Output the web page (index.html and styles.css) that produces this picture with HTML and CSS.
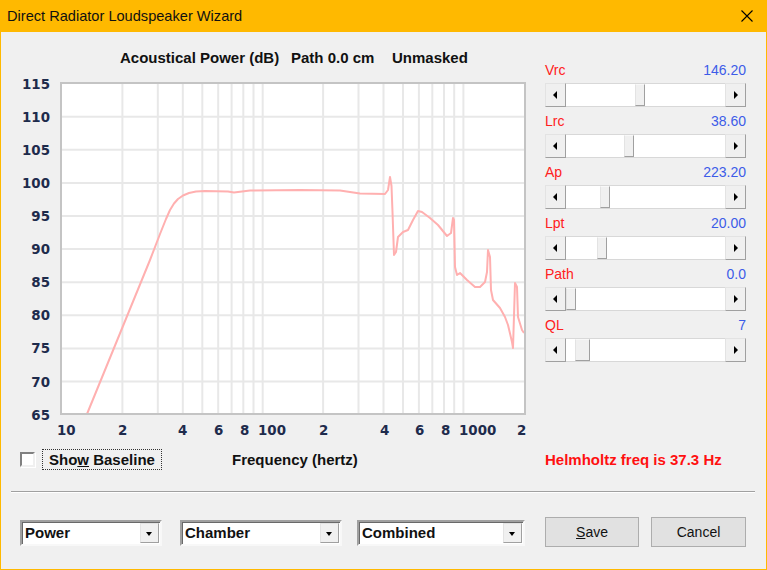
FILE: index.html
```html
<!DOCTYPE html>
<html lang="en">
    <head>
        <meta charset="UTF-8">
        <title>Direct Radiator Loudspeaker Wizard</title>
        <link rel="stylesheet" href="styles.css">
    </head>
    <body>
        <div class="window">
            <div class="titlebar">
                <span class="title">Direct Radiator Loudspeaker Wizard</span>
                <svg class="close" width="12" height="12" viewBox="0 0 12 12">
                    <path d="M0.5 0.5 L11.5 11.5 M11.5 0.5 L0.5 11.5" stroke="#000" stroke-width="1.1" fill="none"/>
                </svg>
            </div>

            <div class="client">
                <div class="upper">
                    <!-- 图表 -->
                    <svg class="chart" width="530" height="410" viewBox="1 33 530 410">
                        <text class="chart-title" x="120" y="62.5">Acoustical Power (dB)</text>
                        <text class="chart-title" x="291" y="62.5">Path 0.0 cm</text>
                        <text class="chart-title" x="392" y="62.5">Unmasked</text>

                        <g class="ylabels">
                            <text x="50" y="88.6">115</text>
                            <text x="50" y="121.7">110</text>
                            <text x="50" y="154.8">105</text>
                            <text x="50" y="187.9">100</text>
                            <text x="50" y="221">95</text>
                            <text x="50" y="254.1">90</text>
                            <text x="50" y="287.2">85</text>
                            <text x="50" y="320.3">80</text>
                            <text x="50" y="353.4">75</text>
                            <text x="50" y="386.5">70</text>
                            <text x="50" y="419.6">65</text>
                        </g>

                        <rect x="61" y="83" width="464" height="331" fill="#fff"/>
                        <g class="grid">
                            <line x1="62" y1="116.7" x2="524" y2="116.7"/>
                            <line x1="62" y1="149.8" x2="524" y2="149.8"/>
                            <line x1="62" y1="182.9" x2="524" y2="182.9"/>
                            <line x1="62" y1="216" x2="524" y2="216"/>
                            <line x1="62" y1="249.1" x2="524" y2="249.1"/>
                            <line x1="62" y1="282.2" x2="524" y2="282.2"/>
                            <line x1="62" y1="315.3" x2="524" y2="315.3"/>
                            <line x1="62" y1="348.4" x2="524" y2="348.4"/>
                            <line x1="62" y1="381.5" x2="524" y2="381.5"/>

                            <line x1="122.4" y1="84" x2="122.4" y2="413"/>
                            <line x1="157.8" y1="84" x2="157.8" y2="413"/>
                            <line x1="182.8" y1="84" x2="182.8" y2="413"/>
                            <line x1="202.3" y1="84" x2="202.3" y2="413"/>
                            <line x1="218.2" y1="84" x2="218.2" y2="413"/>
                            <line x1="231.6" y1="84" x2="231.6" y2="413"/>
                            <line x1="243.3" y1="84" x2="243.3" y2="413"/>
                            <line x1="253.5" y1="84" x2="253.5" y2="413"/>
                            <line x1="262.7" y1="84" x2="262.7" y2="413"/>
                            <line x1="323.1" y1="84" x2="323.1" y2="413"/>
                            <line x1="358.5" y1="84" x2="358.5" y2="413"/>
                            <line x1="383.5" y1="84" x2="383.5" y2="413"/>
                            <line x1="403" y1="84" x2="403" y2="413"/>
                            <line x1="418.9" y1="84" x2="418.9" y2="413"/>
                            <line x1="432.3" y1="84" x2="432.3" y2="413"/>
                            <line x1="444" y1="84" x2="444" y2="413"/>
                            <line x1="454.2" y1="84" x2="454.2" y2="413"/>
                            <line x1="463.4" y1="84" x2="463.4" y2="413"/>
                        </g>
                        <polyline class="curve" points="87,414 150,260 160,234 166,219 170,210 174,203.5 178,199 183,195.5 189,193 196,191.5 205,191 228,191.5 234,192.5 242,191.5 250,190.5 300,190 340,190.5 350,192 360,193.5 385,194 388,190 390,177 391.5,186 392.5,212 394,255 396,252 398,237 403,232 408,230 413,220 418,211 422,212 430,218 438,225 447,236 451,233 453,218 454,220 455,267 457,275 460,273 467,280 475,287 480,287 485,282 487,272 488,250 490,257 491,290 493,300 500,308 505,317 508,325 512,342 513,348 515,283 517,287 518,317 522,330 524,333"/>
                        <rect x="61" y="83" width="464" height="331" fill="none" stroke="#c4c4c4" stroke-width="2"/>

                        <g class="xlabels">
                            <text x="57" y="435">10</text>
                            <text x="118" y="435">2</text>
                            <text x="178" y="435">4</text>
                            <text x="214" y="435">6</text>
                            <text x="240" y="435">8</text>
                            <text x="258" y="435">100</text>
                            <text x="319" y="435">2</text>
                            <text x="380" y="435">4</text>
                            <text x="415" y="435">6</text>
                            <text x="441" y="435">8</text>
                            <text x="459" y="435">1000</text>
                            <text x="517" y="435">2</text>
                        </g>
                    </svg>

                    <!-- 参数滑块 -->
                    <div class="controls">
                        <div class="param">
                            <div class="param-head"><span class="name">Vrc</span><span class="val">146.20</span></div>
                            <div class="scroll">
                                <span class="arrow arrow-left"></span>
                                <div class="track"><span class="thumb" style="margin-left: 69px"></span></div>
                                <span class="arrow arrow-right"></span>
                            </div>
                        </div>
                        <div class="param">
                            <div class="param-head"><span class="name">Lrc</span><span class="val">38.60</span></div>
                            <div class="scroll">
                                <span class="arrow arrow-left"></span>
                                <div class="track"><span class="thumb" style="margin-left: 58px"></span></div>
                                <span class="arrow arrow-right"></span>
                            </div>
                        </div>
                        <div class="param">
                            <div class="param-head"><span class="name">Ap</span><span class="val">223.20</span></div>
                            <div class="scroll">
                                <span class="arrow arrow-left"></span>
                                <div class="track"><span class="thumb" style="margin-left: 34px"></span></div>
                                <span class="arrow arrow-right"></span>
                            </div>
                        </div>
                        <div class="param">
                            <div class="param-head"><span class="name">Lpt</span><span class="val">20.00</span></div>
                            <div class="scroll">
                                <span class="arrow arrow-left"></span>
                                <div class="track"><span class="thumb" style="margin-left: 31px"></span></div>
                                <span class="arrow arrow-right"></span>
                            </div>
                        </div>
                        <div class="param">
                            <div class="param-head"><span class="name">Path</span><span class="val">0.0</span></div>
                            <div class="scroll">
                                <span class="arrow arrow-left"></span>
                                <div class="track"><span class="thumb" style="margin-left: 0px"></span></div>
                                <span class="arrow arrow-right"></span>
                            </div>
                        </div>
                        <div class="param">
                            <div class="param-head"><span class="name">QL</span><span class="val">7</span></div>
                            <div class="scroll">
                                <span class="arrow arrow-left"></span>
                                <div class="track"><span class="thumb thumb-wide" style="margin-left: 9px"></span></div>
                                <span class="arrow arrow-right"></span>
                            </div>
                        </div>
                    </div>
                </div>

                <div class="info-row">
                    <div class="baseline">
                        <span class="checkbox"></span>
                        <span class="focus-label">Sho<u>w</u> Baseline</span>
                    </div>
                    <div class="freq-label">Frequency (hertz)</div>
                    <div class="helmholtz">Helmholtz freq is 37.3 Hz</div>
                </div>

                <div class="separator"></div>

                <div class="button-row">
                    <div class="combo combo-power"><span class="combo-text">Power</span><span class="combo-btn"></span></div>
                    <div class="combo combo-chamber"><span class="combo-text">Chamber</span><span class="combo-btn"></span></div>
                    <div class="combo combo-combined"><span class="combo-text">Combined</span><span class="combo-btn"></span></div>
                    <button class="btn btn-save"><u>S</u>ave</button>
                    <button class="btn btn-cancel">Cancel</button>
                </div>
            </div>
        </div>
    </body>
</html>
```

FILE: styles.css
```css
body {
    margin: 0;
    padding: 0;
    font-family: "Liberation Sans", Arial, sans-serif;
}
.window {
    width: 767px;
    height: 570px;
    box-sizing: border-box;
    border: 1px solid #ffb900;
    border-top: none;
    background: #f0f0f0;
    display: flex;
    flex-direction: column;
}
.titlebar {
    height: 32px;
    flex: none;
    background: #ffb900;
    display: flex;
    align-items: center;
    justify-content: space-between;
    padding: 0 13px 0 6px;
}
.title {
    font-size: 14.6px;
    color: #111;
}
.close {
    display: block;
}
.client {
    flex: 1;
    display: flex;
    flex-direction: column;
}
.upper {
    display: flex;
    height: 410px;
    margin-top: 1px;
}
.chart {
    display: block;
    flex: none;
}
.chart-title {
    font-family: "Liberation Sans", Arial, sans-serif;
    font-weight: bold;
    font-size: 15px;
    fill: #111;
}
.ylabels text {
    text-anchor: end;
}
.ylabels text,
.xlabels text {
    font-family: "DejaVu Sans", sans-serif;
    font-weight: bold;
    font-size: 13.4px;
    fill: #1e2b4c;
}
.grid line {
    stroke: #e8e8e8;
    stroke-width: 2;
}
.curve {
    fill: none;
    stroke: #ffb0b0;
    stroke-width: 2;
    stroke-linejoin: round;
}

/* 右侧滑块 */
.controls {
    padding: 29px 0 0 14px;
    width: 201px;
}
.param {
    margin-bottom: 6px;
}
.param-head {
    display: flex;
    justify-content: space-between;
    height: 16px;
    line-height: 16px;
    font-size: 14px;
    margin-bottom: 5px;
}
.name {
    color: #ff2020;
}
.val {
    color: #3d5ce8;
}
.scroll {
    display: flex;
    height: 24px;
}
.arrow {
    width: 21px;
    box-sizing: border-box;
    background: #f0f0f0;
    border: 1px solid;
    border-color: #e3e3e3 #a0a0a0 #a0a0a0 #e3e3e3;
    position: relative;
}
.arrow::after {
    content: "";
    position: absolute;
    top: 7px;
    width: 0;
    height: 0;
    border-top: 4px solid transparent;
    border-bottom: 4px solid transparent;
}
.arrow-left::after {
    left: 7px;
    border-right: 4px solid #000;
}
.arrow-right::after {
    left: 8px;
    border-left: 4px solid #000;
}
.track {
    flex: 1;
    display: flex;
    background: #fff;
    border-top: 1px solid #d8d8d8;
    border-bottom: 1px solid #d8d8d8;
}
.thumb {
    width: 10px;
    box-sizing: border-box;
    background: #f0f0f0;
    border: 1px solid;
    border-color: #f8f8f8 #a0a0a0 #a0a0a0 #e3e3e3;
}
.thumb-wide {
    width: 15px;
}

/* 复选框一行 */
.info-row {
    display: flex;
    align-items: center;
    height: 28px;
    margin-top: 2px;
    padding-left: 19px;
    font-weight: bold;
    font-size: 15px;
}
.baseline {
    width: 212px;
    display: flex;
    align-items: center;
}
.checkbox {
    width: 15px;
    height: 15px;
    box-sizing: border-box;
    background: #fff;
    border: 2px solid;
    border-color: #808080 #f0f0f0 #f0f0f0 #808080;
    box-shadow: 1px 1px 0 #fff;
}
.focus-label {
    margin-left: 7px;
    padding: 1px 6px 1px 6px;
    border: 1px dotted #333;
    color: #111;
}
.freq-label {
    width: 313px;
    color: #111;
}
.helmholtz {
    color: #ff1010;
}
.separator {
    margin: 18px 11px 0 10px;
    border-top: 1px solid #a0a0a0;
    border-bottom: 1px solid #fff;
}

/* 底部下拉框和按钮 */
.button-row {
    display: flex;
    align-items: flex-start;
    margin-top: 24px;
    padding-left: 19px;
}
.combo {
    height: 26px;
    box-sizing: border-box;
    margin-top: 3px;
    display: flex;
    background: #fff;
    border: 2px solid;
    border-color: #a0a0a0 #f8f8f8 #f8f8f8 #a0a0a0;
    box-shadow: inset 1px 1px 0 #696969;
}
.combo-power {
    width: 142px;
}
.combo-chamber {
    width: 162px;
    margin-left: 18px;
}
.combo-combined {
    width: 168px;
    margin-left: 15px;
}
.combo-text {
    flex: 1;
    padding-left: 3px;
    font-weight: bold;
    font-size: 15px;
    line-height: 21px;
    color: #111;
}
.combo-btn {
    width: 19px;
    margin: 1px 1px 1px 0;
    box-sizing: border-box;
    background: #f0f0f0;
    border: 1px solid;
    border-color: #e3e3e3 #a0a0a0 #a0a0a0 #e3e3e3;
    position: relative;
}
.combo-btn::after {
    content: "";
    position: absolute;
    left: 5px;
    top: 8px;
    border-left: 3.5px solid transparent;
    border-right: 3.5px solid transparent;
    border-top: 4px solid #000;
}
.btn {
    height: 30px;
    padding: 0;
    background: #e1e1e1;
    border: 1px solid #adadad;
    font-family: "Liberation Sans", Arial, sans-serif;
    font-size: 14px;
    color: #111;
}
.btn-save {
    width: 94px;
    margin-left: 20px;
}
.btn-cancel {
    width: 95px;
    margin-left: 12px;
}
```
